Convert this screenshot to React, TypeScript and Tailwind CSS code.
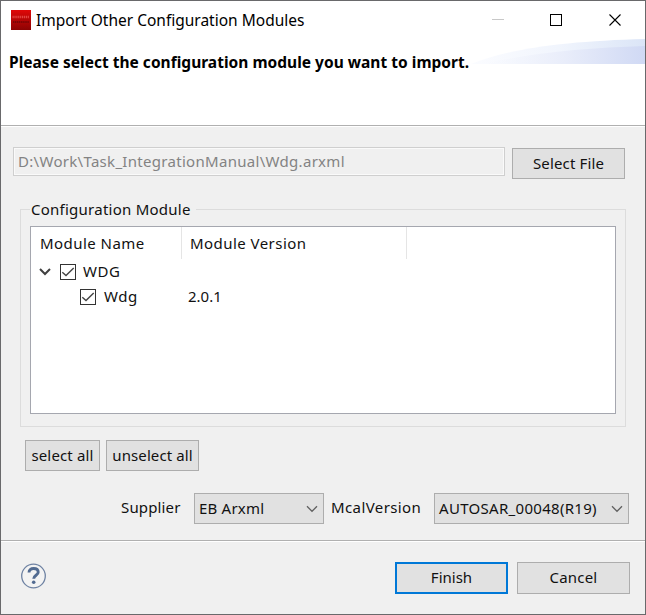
import type { ReactNode } from "react";

function PushButton({ className, children }: { className: string; children: ReactNode }) {
  return (
    <button className={`flex items-center justify-center whitespace-nowrap bg-[#e1e1e1] pb-0.5 ${className}`}>
      {children}
    </button>
  );
}

function Checkbox() {
  return (
    <svg className="block size-4 shrink-0" viewBox="0 0 16 16" fill="none">
      <rect x="0.5" y="0.5" width="15" height="15" fill="#fff" stroke="#333" />
      <path d="M2.3 8.2 6 11.6 13.7 4" stroke="#444" strokeWidth="1.4" />
    </svg>
  );
}

function Select({ className, children }: { className: string; children: ReactNode }) {
  return (
    <div className={`flex h-[31px] items-center justify-between border border-[#adadad] bg-[#e1e1e1] pr-[5px] pl-1 ${className}`}>
      <span className="pb-0.5">{children}</span>
      <svg className="block h-2 w-3 shrink-0" viewBox="0 0 12 8" fill="none">
        <path d="M1 1.3 6 6.3 11 1.3" stroke="#606060" strokeWidth="1.3" />
      </svg>
    </div>
  );
}

export default function App() {
  return (
    <div className="flex h-[615px] w-[646px] flex-col overflow-hidden border border-[#69696b] bg-[#f0f0f0] font-['Noto_Sans','Open_Sans',sans-serif] text-[15px] leading-5 text-[#111]">
      <header className="h-[125px] shrink-0 border-b border-[#b0b0b0] bg-white">
        <div className="flex h-[37px] items-center pl-[10px]">
          <svg className="block size-5" viewBox="0 0 20 20">
            <defs>
              <linearGradient id="badge" x2="0" y2="1">
                <stop stopColor="#e00808" />
                <stop offset="1" stopColor="#8c0303" />
              </linearGradient>
            </defs>
            <path d="M0 0h20v20H0Z" fill="url(#badge)" />
            <path d="M1.5 7h17" stroke="#ff7770" strokeWidth="2.4" strokeDasharray="1.2 .7" opacity=".55" />
            <path d="M2 12h16" stroke="#5b0505" strokeWidth="1.8" strokeDasharray="1.3 .6" opacity=".6" />
          </svg>
          <h1 className="ml-[5px] w-[275px] text-[15.5px] whitespace-nowrap text-black">Import Other Configuration Modules</h1>
          <svg className="ml-auto block h-3 w-[130px]" viewBox="0 0 130 12" fill="none">
            <path d="M0 5.5h12" stroke="#c8c8c8" />
            <rect x="58.5" y="0.5" width="11" height="11" stroke="#000" />
            <path d="m117.5.5 11 11m0-11-11 11" stroke="#000" strokeWidth="1.1" />
          </svg>
          <div className="w-[23px]" />
        </div>
        <div className="flex h-[40px] items-start pl-2">
          <h2 className="mt-[14px] w-[462px] text-[15.5px] font-bold tracking-[0.015px] whitespace-nowrap text-black">
            Please select the configuration module you want to import.
          </h2>
          <svg className="mt-[1px] block h-[25px] w-[174px]" viewBox="0 0 174 25">
            <defs>
              <linearGradient id="swoosh">
                <stop stopColor="#fbfcff" />
                <stop offset=".5" stopColor="#f1f5fd" />
                <stop offset="1" stopColor="#dbe5f7" />
              </linearGradient>
              <linearGradient id="glow">
                <stop stopColor="#f4f6fd" stopOpacity="0" />
                <stop offset=".5" stopColor="#e9edfa" />
                <stop offset="1" stopColor="#d0d9f4" />
              </linearGradient>
            </defs>
            <path d="M0 25C36 10 94 2 174 0v25Z" fill="url(#swoosh)" />
            <path d="M12 25C65 13 115 9 174 7v18Z" fill="url(#glow)" />
          </svg>
        </div>
      </header>

      <main className="flex h-[414px] shrink-0 flex-col border-t border-white">
        <div className="flex items-start pt-5 pl-3">
          <div className="flex h-[29px] w-[492px] items-center border border-[#cfcfcf] bg-[#f0f0f0] pb-0.5 pl-1 tracking-[0.3px] whitespace-nowrap text-[#838383] shadow-[inset_0_0_0_1px_#fafafa]">
            D:\Work\Task_IntegrationManual\Wdg.arxml
          </div>
          <PushButton className="mt-px ml-[7px] h-[31px] w-[113px] border border-[#adadad] tracking-[0.15px]">Select File</PushButton>
        </div>

        <fieldset className="mt-[20px] ml-[19px] h-[228px] w-[606px] border border-[#dcdcdc] pl-[9px]">
          <legend className="h-5 w-[166px] pl-px tracking-[0.25px] whitespace-nowrap">Configuration Module</legend>
          <div className="mt-[7px] h-[188px] w-[586px] border border-[#a5a7af] bg-white">
            <div className="flex h-8 items-center tracking-[0.45px] whitespace-nowrap">
              <div className="flex h-full w-[151px] items-center border-r border-[#e5e5e5] pl-[9px]">Module Name</div>
              <div className="flex h-full w-[225px] items-center border-r border-[#e5e5e5] pl-2">Module Version</div>
            </div>
            <div className="flex h-[25px] items-center pl-2">
              <svg className="block h-2 w-3" viewBox="0 0 12 8" fill="none">
                <path d="M1 1 6 6 11 1" stroke="#404040" strokeWidth="2" />
              </svg>
              <div className="ml-[9px]"><Checkbox /></div>
              <span className="ml-[7px] pb-0.5 tracking-[0.5px]">WDG</span>
            </div>
            <div className="flex h-[25px] items-center pl-[49px]">
              <Checkbox />
              <span className="ml-2 w-[84px] pb-0.5 tracking-[0.5px]">Wdg</span>
              <span className="pb-0.5">2.0.1</span>
            </div>
          </div>
        </fieldset>

        <div className="mt-[13px] flex gap-[6px] pl-6">
          <PushButton className="h-[31px] w-[75px] border border-[#adadad] tracking-[0.15px]">select all</PushButton>
          <PushButton className="h-[31px] w-[93px] border border-[#adadad] tracking-[0.1px]">unselect all</PushButton>
        </div>

        <div className="mt-[22px] flex items-center pl-[120px] whitespace-nowrap">
          <span className="w-[73px] pb-1 tracking-[0.15px]">Supplier</span>
          <Select className="w-[130px] tracking-[0.2px]">EB Arxml</Select>
          <span className="ml-[7px] w-[103px] pb-1 tracking-[0.4px]">McalVersion</span>
          <Select className="w-[195px] tracking-[0.3px]">AUTOSAR_00048(R19)</Select>
        </div>
      </main>

      <footer className="flex grow items-start border-t border-[#b0b0b0] pt-[21px] pr-[15px] pl-5 shadow-[inset_0_1px_0_#fff]">
        <svg className="mt-[1px] block size-[26px]" viewBox="0 0 26 26" fill="none">
          <circle cx="12.5" cy="13" r="11.8" fill="#f3f3f3" stroke="#6f83a3" strokeWidth="1.3" />
          <path d="M8 9.6c0-2.6 1.8-4.1 4.6-4.1s4.6 1.4 4.6 3.7c0 3.1-4.5 3.1-4.5 6.6" stroke="#526b91" strokeWidth="2.9" />
          <circle cx="12.7" cy="19.3" r="1.8" fill="#526b91" />
        </svg>
        <PushButton className="ml-auto h-8 w-[113px] border-2 border-[#0078d7]">Finish</PushButton>
        <PushButton className="ml-[9px] h-8 w-[113px] border border-[#adadad] tracking-[0.2px]">Cancel</PushButton>
      </footer>
    </div>
  );
}
